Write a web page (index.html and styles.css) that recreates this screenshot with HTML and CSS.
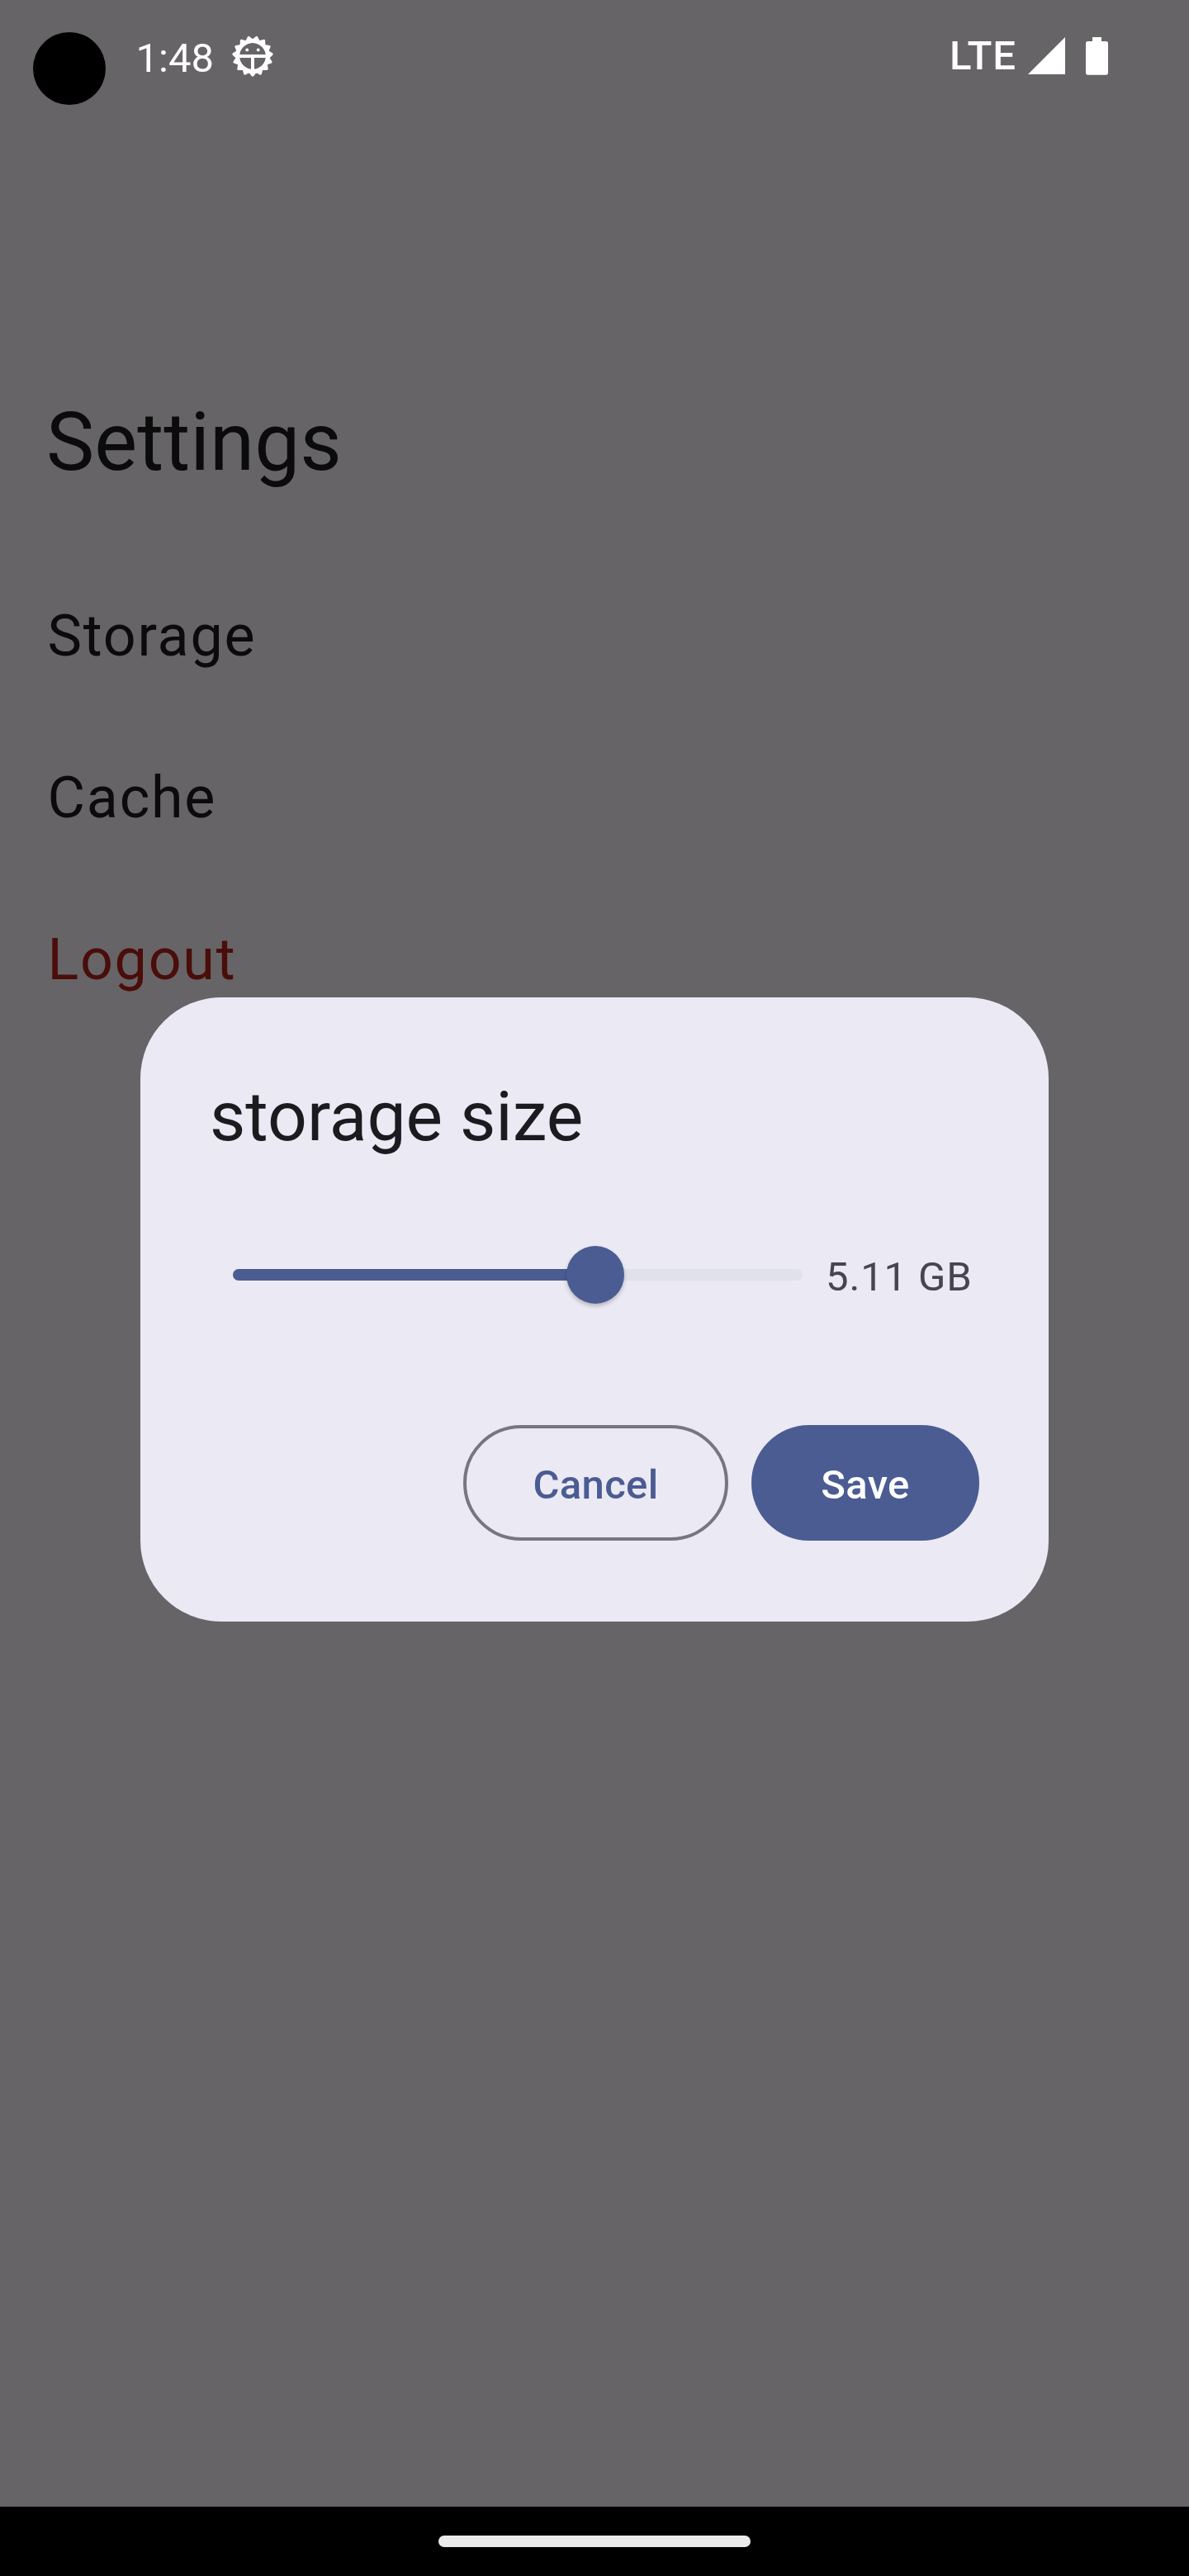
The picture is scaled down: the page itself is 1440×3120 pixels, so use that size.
FILE: index.html
```html
<!DOCTYPE html>
<html lang="en">
<head>
<meta charset="utf-8">
<title>Settings</title>
<link rel="stylesheet" href="styles.css">
</head>
<body>
<div class="screen">
  <header class="status-bar">
    <div class="status-left">
      <span class="camera"></span>
      <span class="clock">1:48</span>
      <svg class="gear" viewBox="-25 -25 50 50" fill="none" stroke="#fff">
        <path fill="#fff" fill-rule="evenodd" stroke-width="3" stroke-linejoin="round" d="M0 23.2L3.91 18.39 9.44 21.19 11.05 15.21 17.24 15.52 16.28 9.4 22.06 7.17 18.7 1.97 23.07-2.42 17.88-5.81 20.09-11.6 13.97-12.58 13.64-18.77 7.65-17.17 4.82-22.69 0-18.8-4.82-22.69-7.65-17.17-13.64-18.77-13.97-12.58-20.09-11.6-17.88-5.81-23.07-2.42-18.7 1.97-22.06 7.17-16.28 9.4-17.24 15.52-11.05 15.21-9.44 21.19-3.91 18.39ZM17.5 0A17.5 17.5 0 1 0-17.5 0A17.5 17.5 0 1 0 17.5 0Z"/>
        <circle r="18.2" stroke-width="4.4"/>
        <path d="M-16 0H16M0 0V17" stroke-width="4"/>
        <g fill="#fff" stroke="none"><circle cx="-6.8" cy="-7.600" r="1.9"/><circle cx="6.700" cy="-7.600" r="1.9"/></g>
      </svg>
    </div>
    <div class="status-right">
      <span class="network">LTE</span>
      <svg class="signal" viewBox="0 0 45 45" fill="#fff"><path d="M45 0V45H0Z"/></svg>
      <svg class="battery" viewBox="0 0 27 46" fill="#fff"><path d="M8 0H19V5H24.500Q27 5 27 7.500V43Q27 45.700 24.500 45.700H2.500Q0 45.700 0 43V7.500Q0 5 2.500 5H8Z"/></svg>
    </div>
  </header>
  <main class="settings">
    <h1 class="page-title">Settings</h1>
    <ul class="menu">
      <li class="menu-item">Storage</li>
      <li class="menu-item">Cache</li>
      <li class="menu-item danger">Logout</li>
    </ul>
  </main>
  <nav class="nav-bar"><span class="handle"></span></nav>
  <section class="dialog" role="dialog">
    <h2 class="dialog-title">storage size</h2>
    <div class="slider-row">
      <div class="track"><div class="fill" style="width:63.700%"></div><div class="thumb"></div></div>
      <span class="value">5.11 GB</span>
    </div>
    <div class="actions">
      <button class="btn outlined">Cancel</button>
      <button class="btn filled">Save</button>
    </div>
  </section>
</div>
</body>
</html>
```
FILE: styles.css
```css
* { box-sizing: border-box; margin: 0; padding: 0; }
body { font-family: Roboto, sans-serif; background: #666467; }
.screen {
  position: relative;
  width: 1440px;
  height: 3120px;
  display: flex;
  flex-direction: column;
  background: #666467;
  overflow: hidden;
}
.status-bar {
  height: 168px;
  display: flex;
  justify-content: space-between;
  align-items: flex-start;
  padding: 39px 98px 0 40px;
  color: #fff;
  font-size: 49px;
  line-height: 58px;
}
.status-left, .status-right { display: flex; align-items: flex-start; }
.camera { width: 88px; height: 88px; border-radius: 50%; background: #000; }
.clock { margin: 3px 0 0 36.5px; width: 96px; }
.gear { width: 50px; height: 50px; margin: 4px 0 0 20px; }
.network { font-weight: 500; font-kerning: normal; letter-spacing: 1px; width: 95px; }
.signal { width: 45px; height: 45px; margin-top: 6px; }
.battery { width: 27px; height: 46px; margin: 6px 0 0 25px; }
.settings { flex: 1; padding-top: 305px; }
.page-title {
  padding-left: 56px;
  font-size: 98px;
  font-weight: 400;
  line-height: 126px;
  color: #0b0b0c;
}
.menu { list-style: none; padding-top: 69px; }
.menu-item {
  height: 196px;
  padding: 60px 57.5px 52px;
  font-size: 70px;
  line-height: 84px;
  letter-spacing: 1.75px;
  color: #0b0b0c;
}
.danger { color: #4a0d0a; }
.nav-bar {
  height: 84px;
  display: flex;
  justify-content: center;
  padding-top: 35px;
  background: #000;
}
.handle { width: 378px; height: 14px; border-radius: 7px; background: #ebebeb; }
.dialog {
  position: absolute;
  left: 170px;
  top: 1208px;
  width: 1100px;
  height: 756px;
  padding: 84px;
  border-radius: 98px;
  background: #ebe9f3;
}
.dialog-title {
  font-size: 84px;
  font-weight: 400;
  line-height: 122px;
  color: #1b1b1f;
}
.slider-row {
  height: 168px;
  margin-top: 46px;
  padding-left: 28px;
  display: flex;
  align-items: center;
}
.track {
  position: relative;
  width: 690px;
  height: 14px;
  border-radius: 7px;
  background: #e1e1eb;
}
.fill { height: 14px; border-radius: 7px; background: #4a5c92; }
.thumb {
  position: absolute;
  left: 404px;
  top: -28px;
  width: 70px;
  height: 70px;
  border-radius: 50%;
  background: #4a5c92;
  box-shadow: 0 3px 5px rgba(0, 0, 0, 0.22);
}
.value {
  margin-left: 28px;
  padding-top: 5px;
  font-size: 49px;
  line-height: 70px;
  letter-spacing: 0.875px;
  color: #45464f;
  white-space: nowrap;
}
.actions {
  display: flex;
  justify-content: flex-end;
  gap: 28px;
  margin-top: 98px;
}
.btn {
  height: 140px;
  padding-top: 6px;
  border-radius: 70px;
  font: 500 49px/70px Roboto, sans-serif;
  letter-spacing: 0.35px;
}
.outlined {
  width: 321px;
  border: 4px solid #777680;
  background: transparent;
  color: #4a5c92;
}
.filled { width: 276px; border: 0; background: #4a5c92; color: #fff; }
```
